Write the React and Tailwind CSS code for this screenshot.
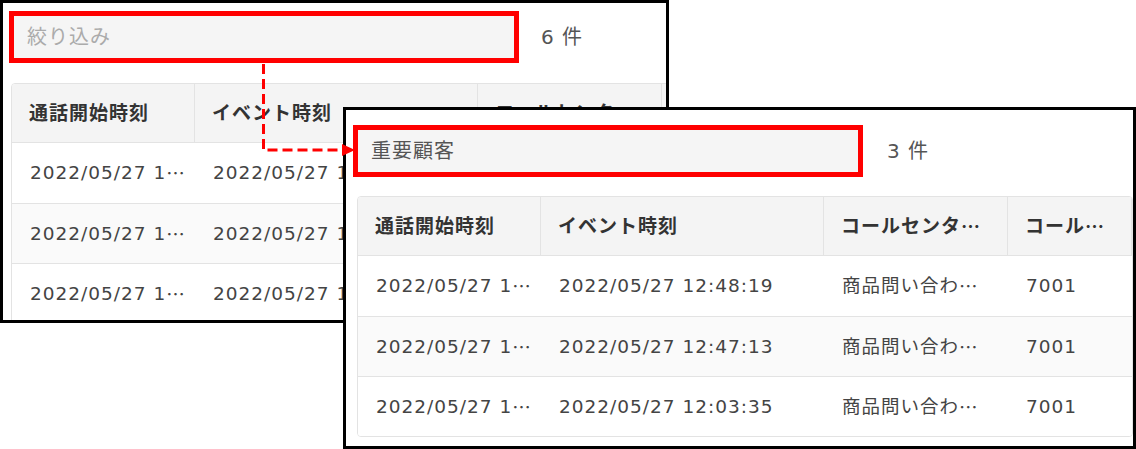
import React from 'react';

const HEAD = [
  { label: '通話開始時刻', w: 'w-[183px]' },
  { label: 'イベント時刻', w: 'w-[283px]' },
  { label: 'コールセンタ…', w: 'w-[184px]' },
  { label: 'コール…', w: 'w-[124px]' },
  { label: '', w: 'w-[160px]' },
];

const ROWS = [
  ['2022/05/27 1…', '2022/05/27 12:48:19', '商品問い合わ…', '7001', ''],
  ['2022/05/27 1…', '2022/05/27 12:47:13', '商品問い合わ…', '7001', ''],
  ['2022/05/27 1…', '2022/05/27 12:03:35', '商品問い合わ…', '7001', ''],
];

// japanese fonts draw the ellipsis at mid height
function Txt({ t }) {
  if (t.endsWith('…')) {
    return (
      <>
        {t.slice(0, -1)}
        <span className="font-['Noto_Sans_CJK_JP',sans-serif]">…</span>
      </>
    );
  }
  return t;
}

// headCols / bodyCols: how many columns carry text (the rest sit under the other window)
function ResultTable({ headCols = 5, bodyCols = 5 }) {
  return (
    <div className="flex-1 overflow-hidden rounded-[4px] border border-[#e3e3e3] bg-white">
      <div className="flex h-[59px] w-max border-b border-[#e3e3e3] bg-[#f4f4f4] text-[19px] font-bold text-[#333]">
        {HEAD.map((c, i) => (
          <div key={i} className={`${c.w} flex shrink-0 items-center whitespace-nowrap border-r border-[#e3e3e3] px-[17px]`}>
            {i < headCols && <Txt t={c.label} />}
          </div>
        ))}
      </div>
      {ROWS.map((row, ri) => (
        <div
          key={ri}
          className={`flex h-[60px] w-max text-[18.5px] text-[#444] ${ri > 0 ? 'border-t border-[#e3e3e3]' : ''} ${ri === 1 ? 'bg-[#fafafa]' : 'bg-white'}`}
        >
          {row.map((cell, ci) => (
            <div key={ci} className={`${HEAD[ci].w} flex shrink-0 items-center whitespace-nowrap pl-[18px]`}>
              {ci < bodyCols && <Txt t={cell} />}
            </div>
          ))}
        </div>
      ))}
    </div>
  );
}

function FilterBar({ value, placeholder, count, gap }) {
  return (
    <div className="flex items-center">
      <div className="flex h-[52px] w-[510px] shrink-0 items-center border-[5px] border-[#ff0000] bg-[#f5f5f5] pl-[13px] text-[20px]">
        {value ? <span className="text-[#555]">{value}</span> : <span className="text-[#ababab]">{placeholder}</span>}
      </div>
      <span className={`${gap} text-[20px] text-[#555]`}>{count} 件</span>
    </div>
  );
}

export default function App() {
  return (
    <div className="relative h-[449px] w-[1136px] overflow-hidden bg-white font-['DejaVu_Sans','Noto_Sans_CJK_JP',sans-serif] tracking-[1px]">
      {/* before filtering */}
      <div className="absolute left-0 top-0 flex h-[323px] w-[669px] flex-col overflow-hidden border-[3px] border-black bg-white pl-[6px] pt-[8px]">
        <FilterBar placeholder="絞り込み" count={6} gap="ml-[22px]" />
        <div className="ml-[2px] mt-[20px] flex w-[900px]">
          <ResultTable headCols={3} bodyCols={2} />
        </div>
      </div>

      {/* after filtering */}
      <div className="absolute left-[343px] top-[107px] flex h-[342px] w-[793px] flex-col overflow-hidden border-[3px] border-black bg-white pl-[7px] pt-[15px]">
        <FilterBar value="重要顧客" count={3} gap="ml-[24px]" />
        <div className="ml-[4px] mt-[19px] flex">
          <ResultTable />
        </div>
      </div>

      <svg className="pointer-events-none absolute left-0 top-0" width="1136" height="449" viewBox="0 0 1136 449">
        <path d="M263.5 64 V150 H343" fill="none" stroke="#ff0000" strokeWidth="3" strokeDasharray="10 5" />
        <polygon points="342,144 355,150 342,156" fill="#ff0000" />
      </svg>
    </div>
  );
}
